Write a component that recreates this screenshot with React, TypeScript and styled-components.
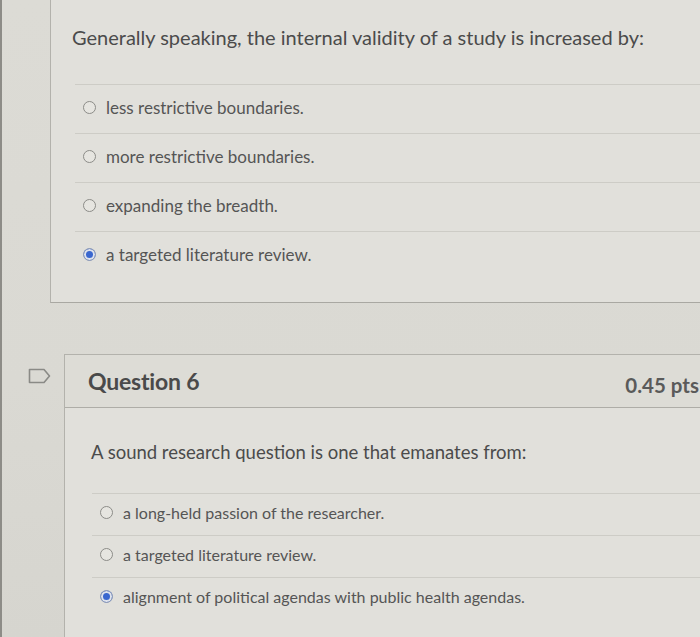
import styled, { createGlobalStyle } from 'styled-components'

const GlobalStyle = createGlobalStyle`
  html, body {
    margin: 0;
    padding: 0;
    background: #d9d8d2;
    overflow: hidden;
  }
  body {
    font-family: "Lato", "Open Sans", sans-serif;
    color: #4e4e4e;
  }
`;

const Page = styled.div`
  width: 700px;
  height: 637px;
  border-left: 2px solid #8d8c87;
  box-sizing: border-box;
  overflow: hidden;
  background: linear-gradient(180deg, #dcdbd5 0%, #dad9d3 60%, #d6d5cf 100%);
`;

const QuestionRow = styled.div<{ $top: number }>`
  display: flex;
  align-items: flex-start;
  margin-top: ${(p) => p.$top}px;
`;

const FlagColumn = styled.div<{ $width: number }>`
  flex: 0 0 ${(p) => p.$width}px;
  box-sizing: border-box;
  padding: 14px 0 0 26px;
`;

const Card = styled.div<{ $open?: boolean }>`
  flex: 1;
  margin-right: -40px;
  background: #e1e0db;
  border-left: 1px solid #b3b2ac;
  border-top: ${(p) => (p.$open ? 'none' : '1px solid #b3b2ac')};
  border-bottom: ${(p) => (p.$open ? '1px solid #a9a8a2' : 'none')};
`;

const Header = styled.div`
  height: 52px;
  display: flex;
  align-items: center;
  justify-content: space-between;
  padding: 0 41px 0 23px;
  background: #dddcd6;
  border-bottom: 1px solid #aeada7;
`;

const Title = styled.h2`
  margin: 0;
  font-size: 23px;
  font-weight: 700;
  color: #4a4a4a;
  letter-spacing: -0.2px;
`;

const Points = styled.span`
  font-size: 20.5px;
  font-weight: 700;
  color: #5a5a5a;
  margin-top: 8px;
`;

const Body = styled.div<{ $pad: string }>`
  padding: ${(p) => p.$pad};
`;

const Prompt = styled.p<{ $size: number; $indent: number }>`
  margin: 0;
  padding-left: ${(p) => p.$indent}px;
  font-size: ${(p) => p.$size}px;
  line-height: 26px;
  color: #4b4b4b;
  white-space: nowrap;
`;

const AnswerList = styled.ul<{ $top: number; $indent: number }>`
  list-style: none;
  margin: ${(p) => p.$top}px 0 0 ${(p) => p.$indent}px;
  padding: 0;
`;

const Answer = styled.li<{ $height: number; $size: number }>`
  display: flex;
  align-items: center;
  gap: 10px;
  height: ${(p) => p.$height}px;
  padding: 0 0 4px 8px;
  box-sizing: border-box;
  border-top: 1px solid #cdccc6;
  font-size: ${(p) => p.$size}px;
  color: #555;
`;

const Radio = styled.span<{ $checked?: boolean }>`
  flex: 0 0 auto;
  width: 13px;
  height: 13px;
  border-radius: 50%;
  box-sizing: border-box;
  border: ${(p) => (p.$checked ? '1px solid #8f9bb5' : '1.5px solid #8c8c88')};
  background: ${(p) => (p.$checked ? '#3a67cf' : '#e6e5e0')};
  box-shadow: ${(p) => (p.$checked ? 'inset 0 0 0 2px #dfe3ec' : 'none')};
`;

function Flag() {
  return (
    <svg width="23" height="16" viewBox="0 0 23 16">
      <path d="M1.5 1.5 H16 L21.5 8 L16 14.5 H1.5 Z" fill="none" stroke="#8a8a86" strokeWidth="1.6" strokeLinejoin="round" />
    </svg>
  );
}

const first = [
  { text: 'less restrictive boundaries.' },
  { text: 'more restrictive boundaries.' },
  { text: 'expanding the breadth.' },
  { text: 'a targeted literature review.', checked: true },
];

const second = [
  { text: 'a long-held passion of the researcher.' },
  { text: 'a targeted literature review.' },
  { text: 'alignment of political agendas with public health agendas.', checked: true },
];

export default function App(): JSX.Element {
  return (
    <>
      <GlobalStyle />
      <Page>
        <QuestionRow $top={0}>
          <FlagColumn $width={48} />
          <Card $open>
            <Body $pad="24px 0 22px 0">
              <Prompt $size={20} $indent={21}>
                Generally speaking, the internal validity of a study is increased by:
              </Prompt>
              <AnswerList $top={34} $indent={24}>
                {first.map((a, i) => (
                  <Answer key={i} $height={49} $size={17}>
                    <Radio $checked={a.checked} />
                    {a.text}
                  </Answer>
                ))}
              </AnswerList>
            </Body>
          </Card>
        </QuestionRow>

        <QuestionRow $top={51}>
          <FlagColumn $width={62}>
            <Flag />
          </FlagColumn>
          <Card>
            <Header>
              <Title>Question 6</Title>
              <Points>0.45 pts</Points>
            </Header>
            <Body $pad="31px 0 40px 0">
              <Prompt $size={18.5} $indent={26}>
                A sound research question is one that emanates from:
              </Prompt>
              <AnswerList $top={28} $indent={27}>
                {second.map((a, i) => (
                  <Answer key={i} $height={42} $size={16}>
                    <Radio $checked={a.checked} />
                    {a.text}
                  </Answer>
                ))}
              </AnswerList>
            </Body>
          </Card>
        </QuestionRow>
      </Page>
    </>
  );
}
